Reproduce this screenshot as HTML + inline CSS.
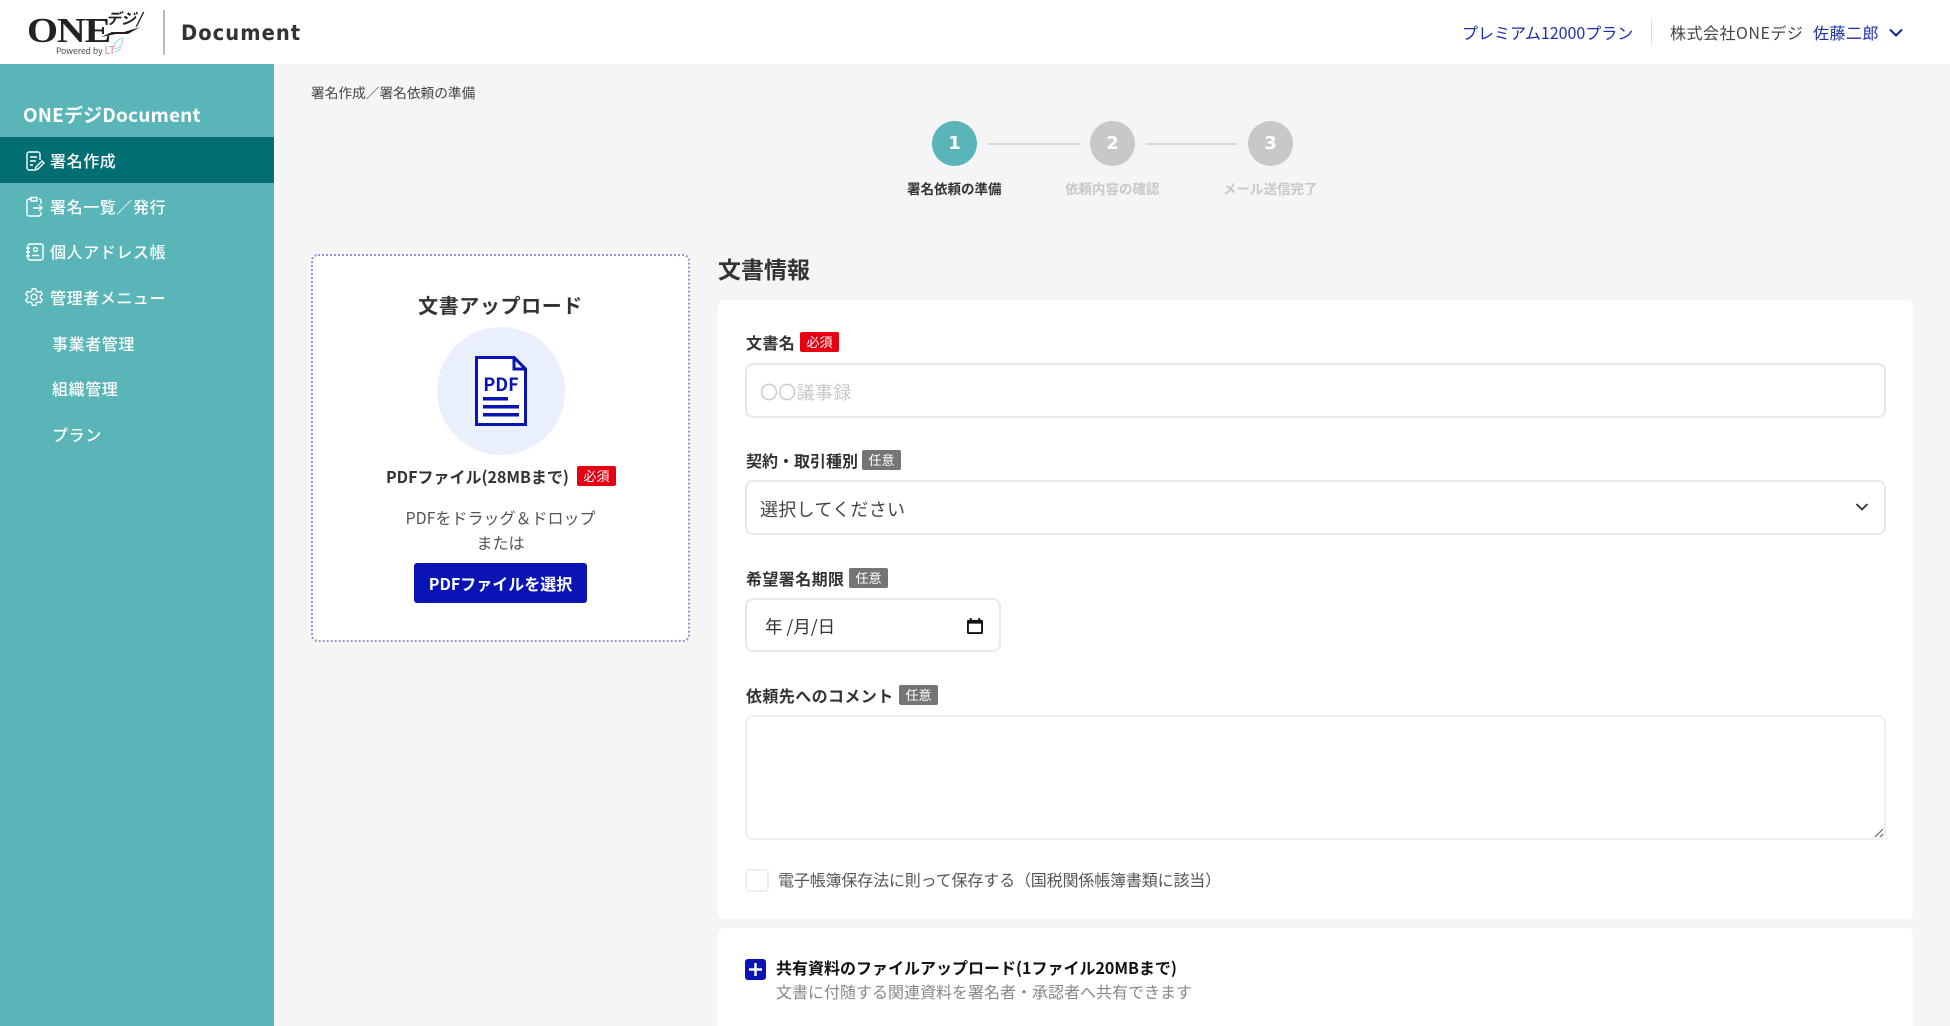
<!DOCTYPE html>
<html lang="ja"><head><meta charset="utf-8"><title>ONEデジ Document</title>
<style>
*{box-sizing:border-box}
html,body{margin:0;padding:0}
body{width:1950px;height:1026px;overflow:hidden;background:#f5f5f5;position:relative;font-family:"Noto Sans CJK JP","Liberation Sans",sans-serif;color:#333}
.a{position:absolute;white-space:nowrap;line-height:1}
.box{position:absolute;background:#fff;border:2px solid #e8e8e8;border-radius:8px}
.tag{position:absolute;width:39px;height:20px;border-radius:2px;color:#fff;font-size:13px;line-height:20px;text-align:center}
.r{background:#e60012}.g{background:#757575}
.lb{font-size:16px;font-weight:700;color:#333;letter-spacing:.4px}
.nav{font-size:16px;color:#fff;font-weight:500;letter-spacing:.6px}
svg{position:absolute;display:block}
</style></head><body>
<div class="a" style="left:0;top:0;width:1950px;height:64px;background:#fff"></div>
<div class="a" style="left:27px;top:13px;font-family:'Liberation Serif',serif;font-weight:700;font-size:35px;color:#222;transform:scaleX(1.14);transform-origin:left;letter-spacing:-1px">ONE</div>
<div class="a" style="left:106px;top:11px;font-size:15px;font-weight:700;font-style:italic;color:#222">デジ/</div>
<svg style="left:100px;top:26px" width="42" height="12" viewBox="0 0 42 12"><path d="M1 11L12 6H24L40 1L28 8H16Z" fill="#222"/></svg>
<div class="a" style="left:56px;top:45px;font-size:8.500px;color:#444">Powered by <span style="color:#e08a9a;font-size:11px">LT</span></div>
<svg style="left:111px;top:36px" width="14" height="18" viewBox="0 0 14 18"><path d="M2 13C9 13 12 7 12 2 7 3 4 6 3 10M3 16C6 16 9 14 10 11" fill="none" stroke="#9fd4dc" stroke-width="1"/></svg>
<div class="a" style="left:163px;top:10px;width:2px;height:45px;background:#bbb"></div>
<div class="a" style="left:181px;top:23px;font-size:21px;font-weight:700;color:#333;letter-spacing:1.100px;font-family:'DejaVu Sans','Liberation Sans',sans-serif;transform:scaleX(.93);transform-origin:left">Document</div>
<div class="a" style="left:1462px;top:24px;font-size:16px;color:#1a2fa8">プレミアム12000プラン</div>
<div class="a" style="left:1651px;top:20px;width:1px;height:24px;background:#ddd"></div>
<div class="a" style="left:1670px;top:24px;font-size:16px;color:#444;letter-spacing:.5px">株式会社ONEデジ</div>
<div class="a" style="left:1813px;top:24px;font-size:16px;color:#1a2fa8;letter-spacing:.5px">佐藤二郎</div>
<svg style="left:1888px;top:27px" width="16" height="12" viewBox="0 0 16 12"><path d="M2 2.500L8 8.500L14 2.500" fill="none" stroke="#0f1fa0" stroke-width="2"/></svg>

<div class="a" style="left:0;top:64px;width:274px;height:962px;background:#59b5b8"></div>
<div class="a" style="left:0;top:137px;width:274px;height:46px;background:#006e73"></div>
<div class="a" style="left:23px;top:105px;font-size:19px;font-weight:700;color:#fff;letter-spacing:.15px">ONEデジDocument</div>
<svg style="left:25px;top:151px" width="20" height="21" viewBox="0 0 20 21" fill="none" stroke="#fff" stroke-width="1.400"><path d="M9 19H4a2 2 0 0 1-2-2V3a2 2 0 0 1 2-2h9a2 2 0 0 1 2 2v6M5 6h7M5 10h6M5 14h3M10 19l1-3 6-6 2 2-6 6z"/></svg>
<div class="a nav" style="left:50px;top:152px">署名作成</div>
<svg style="left:25px;top:196px" width="19" height="21" viewBox="0 0 19 21" fill="none" stroke="#fff" stroke-width="1.400"><path d="M6 3H4a2 2 0 0 0-2 2v13a2 2 0 0 0 2 2h10a2 2 0 0 0 2-2v-2M14 3h0a2 2 0 0 1 2 2v3M6 1.500h6V5H6zM8 12h9M14 9l3 3-3 3"/></svg>
<div class="a nav" style="left:50px;top:198px">署名一覧／発行</div>
<svg style="left:25px;top:243px" width="19" height="18" viewBox="0 0 19 18" fill="none" stroke="#fff" stroke-width="1.400"><rect x="3" y="1" width="15" height="16" rx="2"/><circle cx="10.500" cy="6.500" r="2"/><path d="M7 12.500h7M1 5h4M1 9h4M1 13h4"/></svg>
<div class="a nav" style="left:50px;top:243px">個人アドレス帳</div>
<svg style="left:24px;top:287px" width="20" height="20" viewBox="0 0 24 24" fill="none" stroke="#fff" stroke-width="1.600"><circle cx="12" cy="12" r="3.500"/><path d="M10 2h4l.7 3 2.300 1.200 2.900-1 2 3.500-2.300 2v2.600l2.300 2-2 3.500-2.900-1-2.300 1.200-.7 3h-4l-.7-3L7 17.800l-2.900 1-2-3.500 2.300-2v-2.600l-2.300-2 2-3.500 2.900 1L9.300 5z"/></svg>
<div class="a nav" style="left:50px;top:289px">管理者メニュー</div>
<div class="a nav" style="left:52px;top:335px">事業者管理</div>
<div class="a nav" style="left:52px;top:380px">組織管理</div>
<div class="a nav" style="left:52px;top:426px">プラン</div>

<div class="a" style="left:311px;top:86px;font-size:13.700px;color:#444">署名作成／署名依頼の準備</div>

<div class="a" style="left:932px;top:121px;width:45px;height:45px;border-radius:50%;background:#59b5b8;color:#fff;font:700 18px/45px 'DejaVu Sans',sans-serif;text-align:center">1</div>
<div class="a" style="left:988px;top:143px;width:91px;height:2px;background:#d8d8d8"></div>
<div class="a" style="left:1090px;top:121px;width:45px;height:45px;border-radius:50%;background:#c8c8c8;color:#fff;font:700 18px/45px 'DejaVu Sans',sans-serif;text-align:center">2</div>
<div class="a" style="left:1146px;top:143px;width:91px;height:2px;background:#d8d8d8"></div>
<div class="a" style="left:1248px;top:121px;width:45px;height:45px;border-radius:50%;background:#c8c8c8;color:#fff;font:700 18px/45px 'DejaVu Sans',sans-serif;text-align:center">3</div>
<div class="a" style="left:907px;top:182px;font-size:13.500px;font-weight:700;color:#333">署名依頼の準備</div>
<div class="a" style="left:1065px;top:182px;font-size:13.500px;font-weight:700;color:#c8c8c8">依頼内容の確認</div>
<div class="a" style="left:1223px;top:182px;font-size:13.500px;font-weight:700;color:#c8c8c8">メール送信完了</div>

<div class="a" style="left:311px;top:254px;width:379px;height:388px;background:#fff;border:2px dotted #8e97cf;border-radius:7px"></div>
<div class="a" style="left:311px;top:295px;width:379px;text-align:center;font-size:20px;font-weight:700;color:#333;letter-spacing:.6px">文書アップロード</div>
<div class="a" style="left:437px;top:327px;width:128px;height:128px;border-radius:50%;background:#e9f0fc"></div>
<svg style="left:475px;top:356px" width="52" height="70" viewBox="0 0 52 70"><path d="M1.500 1.500H39L50.500 13V68.500H1.500Z" fill="#fff" stroke="#0a14b4" stroke-width="3"/><path d="M39 1.500V13H50.500Z" fill="#fff" stroke="#0a14b4" stroke-width="3"/><rect x="8" y="41" width="25" height="3.500" fill="#0a14b4"/><rect x="8" y="49" width="36" height="3.500" fill="#0a14b4"/><rect x="8" y="57" width="36" height="3.500" fill="#0a14b4"/><text x="26" y="35" text-anchor="middle" font-family="Noto Sans CJK JP,sans-serif" font-weight="700" font-size="18" fill="#0a14b4">PDF</text></svg>
<div class="a" style="left:386px;top:468px;font-size:16px;font-weight:700;color:#333">PDFファイル(28MBまで)</div>
<div class="tag r" style="left:577px;top:466px">必須</div>
<div class="a" style="left:311px;top:509px;width:379px;text-align:center;font-size:16px;color:#555">PDFをドラッグ＆ドロップ</div>
<div class="a" style="left:311px;top:534px;width:379px;text-align:center;font-size:16px;color:#555">または</div>
<div class="a" style="left:414px;top:563px;width:173px;height:40px;background:#0a14b4;border-radius:3px;color:#fff;font-size:16px;font-weight:700;line-height:40px;text-align:center">PDFファイルを選択</div>

<div class="a" style="left:718px;top:257px;font-size:23px;font-weight:700;color:#333">文書情報</div>
<div class="a" style="left:718px;top:300px;width:1195px;height:619px;background:#fff;border-radius:6px"></div>
<div class="a" style="left:718px;top:928px;width:1195px;height:98px;background:#fff;border-radius:6px 6px 0 0"></div>

<div class="a lb" style="left:746px;top:334px">文書名</div>
<div class="tag r" style="left:800px;top:332px">必須</div>
<div class="box" style="left:745px;top:363px;width:1141px;height:55px"></div>
<div class="a" style="left:760px;top:383px;font-size:18px;color:#c8c8c8;letter-spacing:.3px">〇〇議事録</div>

<div class="a lb" style="left:746px;top:452px;letter-spacing:0">契約・取引種別</div>
<div class="tag g" style="left:862px;top:450px">任意</div>
<div class="box" style="left:745px;top:480px;width:1141px;height:55px"></div>
<div class="a" style="left:760px;top:500px;font-size:18px;color:#444;letter-spacing:.3px">選択してください</div>
<svg style="left:1855px;top:502px" width="14" height="10" viewBox="0 0 14 10"><path d="M1.500 2L7 7.500L12.500 2" fill="none" stroke="#333" stroke-width="1.800"/></svg>

<div class="a lb" style="left:746px;top:570px">希望署名期限</div>
<div class="tag g" style="left:849px;top:568px">任意</div>
<div class="box" style="left:745px;top:598px;width:256px;height:54px"></div>
<div class="a" style="left:765px;top:618px;font-size:17.500px;color:#333">年 /月/日</div>
<svg style="left:967px;top:617px" width="16" height="17" viewBox="0 0 17 18"><path d="M3 1h2v2h7V1h2v2h1.500A1.500 1.500 0 0 1 17 4.500v12a1.500 1.500 0 0 1-1.500 1.500h-14A1.500 1.500 0 0 1 0 16.500v-12A1.500 1.500 0 0 1 1.500 3H3z M2 7v9h13V7z" fill="#111"/></svg>

<div class="a lb" style="left:746px;top:687px">依頼先へのコメント</div>
<div class="tag g" style="left:899px;top:685px">任意</div>
<div class="box" style="left:745px;top:715px;width:1141px;height:125px;border-color:#eeeeee"></div>
<svg style="left:1873px;top:827px" width="12" height="12" viewBox="0 0 12 12"><path d="M2 10L10 2M7 10L10 7" stroke="#666" stroke-width="1.200"/></svg>

<div class="a" style="left:745px;top:869px;width:24px;height:23px;background:#fff;border:2px solid #eee;border-radius:4px"></div>
<div class="a" style="left:778px;top:871px;font-size:16px;color:#555;letter-spacing:-.15px">電子帳簿保存法に則って保存する（国税関係帳簿書類に該当）</div>

<div class="a" style="left:745px;top:959px;width:21px;height:21px;background:#0a14b4;border-radius:3px"></div>
<svg style="left:745px;top:959px" width="21" height="21" viewBox="0 0 21 21"><path d="M10.500 4V17M4 10.500H17" stroke="#fff" stroke-width="2.400"/></svg>
<div class="a" style="left:776px;top:959px;font-size:16px;font-weight:700;color:#111">共有資料のファイルアップロード(1ファイル20MBまで)</div>
<div class="a" style="left:776px;top:983px;font-size:16px;color:#888">文書に付随する関連資料を署名者・承認者へ共有できます</div>
</body></html>
